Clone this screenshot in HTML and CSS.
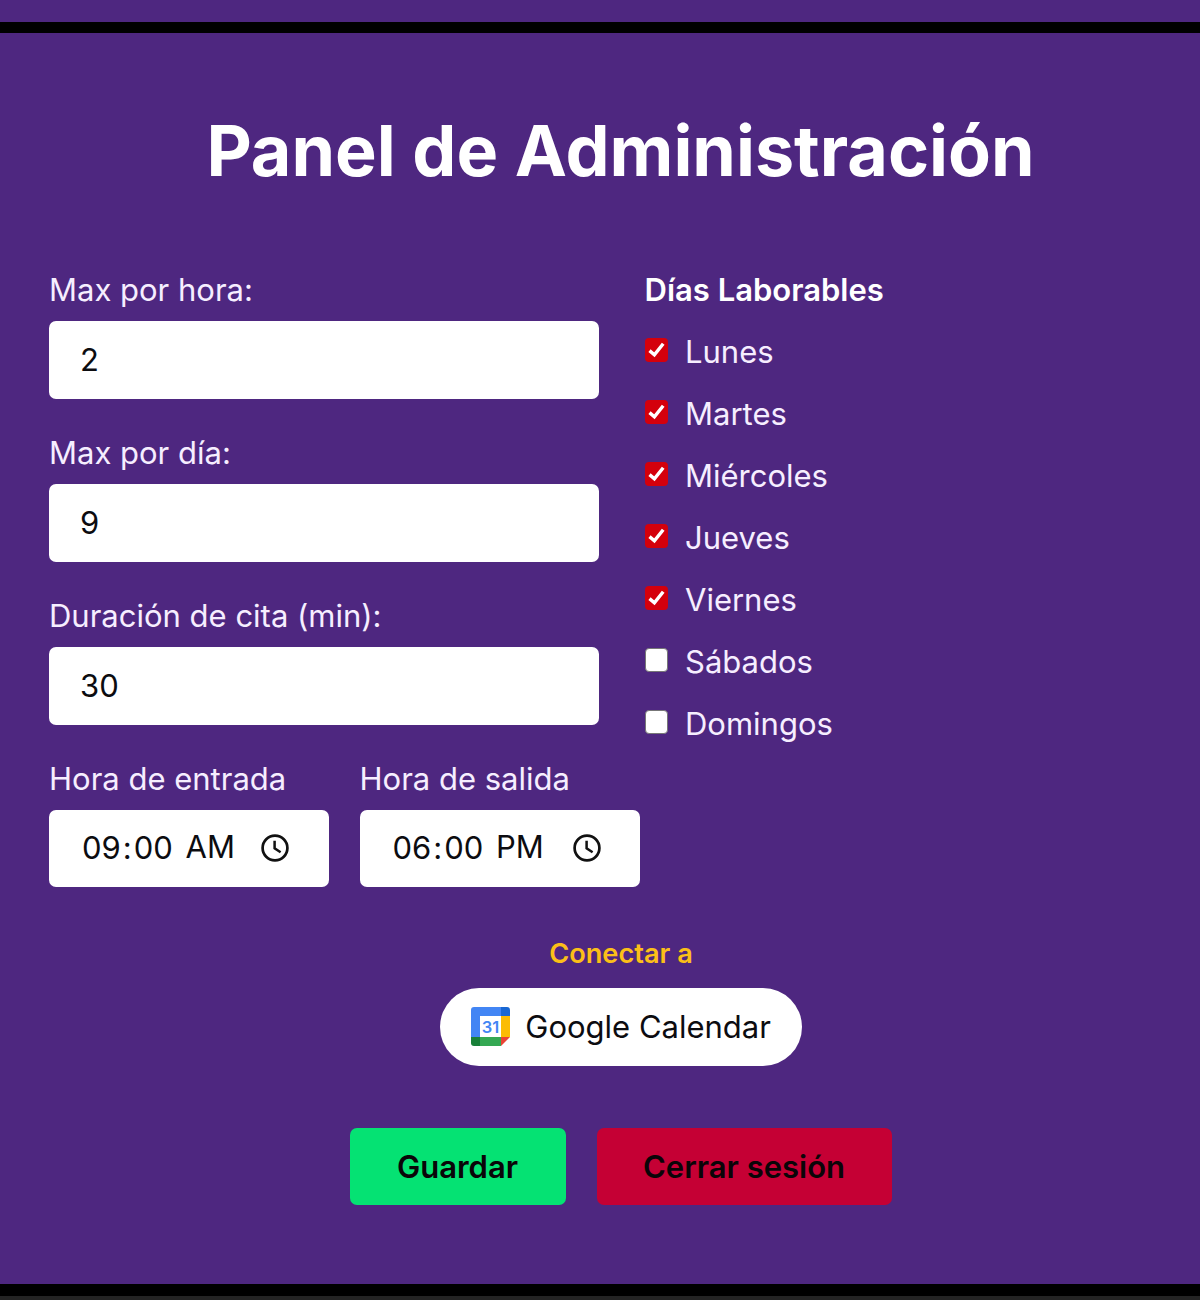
FILE: index.html
```html
<!DOCTYPE html>
<html lang="es">
<head>
<meta charset="utf-8">
<title>Panel de Administración</title>
<link rel="stylesheet" href="styles.css">
</head>
<body>
<div class="strip"></div>
<main class="panel">
  <h1 class="title"><span>Panel de Administración</span></h1>
  <form class="settings">
    <div class="fields">
      <label class="field"><span class="label">Max por hora:</span><span class="input">2</span></label>
      <label class="field"><span class="label">Max por día:</span><span class="input">9</span></label>
      <label class="field"><span class="label">Duración de cita (min):</span><span class="input">30</span></label>
      <div class="times">
        <div class="field entry"><span class="label">Hora de entrada</span>
          <span class="input time"><span class="digits">09<span class="colon">:</span>00</span><span class="meridiem">AM</span>
            <svg class="clock" viewBox="0 0 28 28"><circle cx="14" cy="14" r="12.4"/><path d="M13.6 6.8v7.6l6 3.8"/></svg></span></div>
        <div class="field exit"><span class="label">Hora de salida</span>
          <span class="input time"><span class="digits">06<span class="colon">:</span>00</span><span class="meridiem">PM</span>
            <svg class="clock" viewBox="0 0 28 28"><circle cx="14" cy="14" r="12.4"/><path d="M13.6 6.8v7.6l6 3.8"/></svg></span></div>
      </div>
    </div>
    <div class="days">
      <h2 class="days-title">Días Laborables</h2>
      <div class="day"><svg class="box on" viewBox="0 0 24 24"><path d="M4.6 12.6 9.6 16.8 18.6 5.6"/></svg><span>Lunes</span></div>
      <div class="day"><svg class="box on" viewBox="0 0 24 24"><path d="M4.6 12.6 9.6 16.8 18.6 5.6"/></svg><span>Martes</span></div>
      <div class="day"><svg class="box on" viewBox="0 0 24 24"><path d="M4.6 12.6 9.6 16.8 18.6 5.6"/></svg><span>Miércoles</span></div>
      <div class="day"><svg class="box on" viewBox="0 0 24 24"><path d="M4.6 12.6 9.6 16.8 18.6 5.6"/></svg><span>Jueves</span></div>
      <div class="day"><svg class="box on" viewBox="0 0 24 24"><path d="M4.6 12.6 9.6 16.8 18.6 5.6"/></svg><span>Viernes</span></div>
      <div class="day"><span class="box"></span><span>Sábados</span></div>
      <div class="day"><span class="box"></span><span>Domingos</span></div>
    </div>
  </form>
  <section class="connect">
    <p class="connect-label">Conectar a</p>
    <button class="google" type="button">
      <svg class="calendar" viewBox="0 0 39 39">
        <path fill="#fff" d="M8 8h23v23H8z"/>
        <path fill="#4285f4" d="M3 0h27v9H9v21H0V3a3 3 0 0 1 3-3z"/>
        <path fill="#1967d2" d="M30 0h6a3 3 0 0 1 3 3v6h-9z"/>
        <path fill="#fbbc04" d="M30 9h9v21h-9z"/>
        <path fill="#34a853" d="M9 30h21v9H9z"/>
        <path fill="#188038" d="M0 30h9v9H3a3 3 0 0 1-3-3z"/>
        <path fill="#ea4335" d="M30 30h9l-9 9z"/>
        <text x="19.6" y="25.6" text-anchor="middle">31</text>
      </svg>
      <span>Google Calendar</span>
    </button>
  </section>
  <div class="actions">
    <button class="btn save" type="button">Guardar</button>
    <button class="btn logout" type="button">Cerrar sesión</button>
  </div>
</main>
<div class="footer-strip"></div>
</body>
</html>
```
FILE: styles.css
```css
* { box-sizing: border-box; }
body {
  margin: 0;
  height: 1300px;
  overflow: hidden;
  background: #4e2780;
  color: #f6eeff;
  font: 400 31px/46.5px Inter, "Liberation Sans", sans-serif;
  display: flex;
  flex-direction: column;
}
.strip { height: 33px; flex: none; border-bottom: 11px solid #000; }
.panel { height: 1251px; flex: none; padding: 79px 0 0 49px; }
.title {
  margin: 0;
  width: 1143px;
  height: 78px;
  line-height: 78px;
  text-align: center;
  font-size: 70px;
  font-weight: 700;
  color: #fff;
}
.settings { display: flex; gap: 46px; margin-top: 77px; height: 620px; }
.fields { width: 549.5px; display: flex; flex-direction: column; gap: 31px; }
.field { display: flex; flex-direction: column; gap: 7.8px; }
.label { white-space: nowrap; }
.input {
  display: flex;
  align-items: center;
  height: 77.6px;
  padding: 0 31px;
  border-radius: 7px;
  background: #fff;
  color: #0c0c10;
}
.times { display: flex; gap: 31px; width: 592px; }
.entry { width: 279.5px; }
.exit { width: 280.5px; }
.time { height: 77.3px; padding: 0 39.5px 1px 33px; }
.digits { width: 103.5px; }
.colon { padding: 0 2px; }
.meridiem { position: relative; top: -1px; }
.clock { width: 28px; height: 28px; margin-left: auto; fill: none; stroke: #111; stroke-width: 2.7; }
.clock path { stroke-width: 2.5; }
.days { display: flex; flex-direction: column; gap: 15.5px; }
.days-title { margin: 0; font-size: 31px; line-height: 46.5px; font-weight: 600; color: #fff; }
.day { display: flex; align-items: center; gap: 17px; }
.box { width: 23.5px; height: 24px; margin-bottom: 5px; border-radius: 4px; background: #fff; border: 1.5px solid #777; }
.box.on { background: #d4000c; border: 0; fill: none; stroke: #fff; stroke-width: 3.5; }
.connect { width: 1144px; margin-top: 47px; display: flex; flex-direction: column; align-items: center; }
.connect-label { margin: 0 0 15px; font-size: 27.2px; line-height: 39px; font-weight: 600; color: #fbbf18; }
.google {
  height: 77.5px;
  padding: 0 31px;
  border: 0;
  border-radius: 39px;
  background: #fff;
  color: #0c0c10;
  font: inherit;
  display: flex;
  align-items: center;
  gap: 15.2px;
}
.calendar { width: 39px; height: 39px; }
.calendar text { font: 600 16.5px Inter, sans-serif; fill: #4285f4; }
.actions { width: 1143px; margin-top: 62px; display: flex; justify-content: center; gap: 31px; }
.btn { height: 77.5px; padding: 1px 0 0; border: 0; border-radius: 7px; color: #0a0508; font: 600 31px/46.5px Inter, sans-serif; }
.save { width: 216px; background: #05e273; }
.logout { width: 295px; background: #c50034; }
.footer-strip { height: 16px; flex: none; background: #242424; border-top: 12px solid #000; }
```
